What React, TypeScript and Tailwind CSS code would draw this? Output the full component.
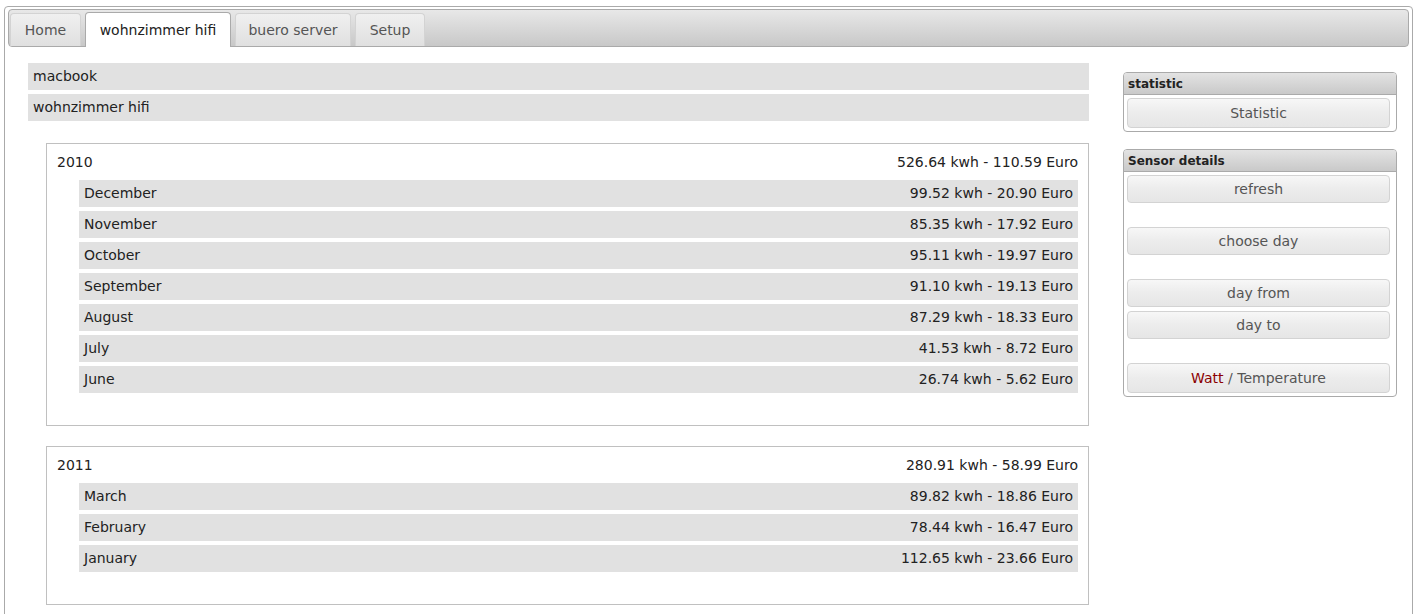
import React from 'react';

type Month = { name: string; value: string };
type Year = { year: string; total: string; months: Month[] };

const tabs = [
  { label: 'Home', width: 'w-[71px]' },
  { label: 'wohnzimmer hifi', width: 'w-[146px]' },
  { label: 'buero server', width: 'w-[116px]' },
  { label: 'Setup', width: 'w-[70px]' },
];
const activeTab = 'wohnzimmer hifi';

const devices = ['macbook', 'wohnzimmer hifi'];

const years: Year[] = [
  {
    year: '2010',
    total: '526.64 kwh - 110.59 Euro',
    months: [
      { name: 'December', value: '99.52 kwh - 20.90 Euro' },
      { name: 'November', value: '85.35 kwh - 17.92 Euro' },
      { name: 'October', value: '95.11 kwh - 19.97 Euro' },
      { name: 'September', value: '91.10 kwh - 19.13 Euro' },
      { name: 'August', value: '87.29 kwh - 18.33 Euro' },
      { name: 'July', value: '41.53 kwh - 8.72 Euro' },
      { name: 'June', value: '26.74 kwh - 5.62 Euro' },
    ],
  },
  {
    year: '2011',
    total: '280.91 kwh - 58.99 Euro',
    months: [
      { name: 'March', value: '89.82 kwh - 18.86 Euro' },
      { name: 'February', value: '78.44 kwh - 16.47 Euro' },
      { name: 'January', value: '112.65 kwh - 23.66 Euro' },
    ],
  },
];

function Button({ children, tall, className = '' }: { children: React.ReactNode; tall?: boolean; className?: string }) {
  return (
    <div
      className={`flex items-center justify-center rounded-[4px] border border-[#d3d3d3] bg-gradient-to-b from-[#f7f7f7] via-[#ececec] to-[#e6e6e6] text-[14px] text-[#555] ${
        tall ? 'h-[30px]' : 'h-[28px]'
      } ${className}`}
    >
      {children}
    </div>
  );
}

function Panel({ title, children }: { title: string; children: React.ReactNode }) {
  return (
    <div className="rounded-[4px] border border-[#aaa] bg-white">
      <div className="flex h-[22px] items-center rounded-t-[3px] border-b border-[#aaa] bg-gradient-to-b from-[#e3e3e3] to-[#c9c9c9] px-[4px] text-[12px] font-bold text-[#222]">
        {title}
      </div>
      <div className="pl-[3px] pr-[6px] pt-[3px] pb-[3px]">{children}</div>
    </div>
  );
}

function YearBox({ data, className = '' }: { data: Year; className?: string }) {
  return (
    <div className={`ml-[18px] border border-[#c0c0c0] pl-[10px] pr-[10px] pt-[5px] pb-[32px] ${className}`}>
      <div className="flex h-[27px] items-center justify-between">
        <span>{data.year}</span>
        <span>{data.total}</span>
      </div>
      <div className="ml-[22px] mt-[4px] flex flex-col gap-[4px]">
        {data.months.map((m) => (
          <div key={m.name} className="flex h-[27px] items-center justify-between bg-[#e1e1e1] px-[5px]">
            <span>{m.name}</span>
            <span>{m.value}</span>
          </div>
        ))}
      </div>
    </div>
  );
}

export default function App() {
  return (
    <div className="h-[614px] overflow-hidden bg-white text-[14px] text-[#222]" style={{ fontFamily: '"DejaVu Sans", Verdana, sans-serif' }}>
      <div className="mx-[4px] mt-[6px] h-[640px] rounded-[4px] border border-[#aaa] px-[3px] pt-[2px]">
        {/* tab bar */}
        <div className="flex h-[38px] items-end gap-[4px] rounded-[4px] border border-[#aaa] bg-gradient-to-b from-[#e8e8e8] to-[#c8c8c8] pl-[1px]">
          {tabs.map((t) =>
            t.label === activeTab ? (
              <div
                key={t.label}
                className={`-mb-[1px] flex h-[35px] items-center justify-center rounded-t-[4px] border border-b-0 border-[#aaa] bg-white text-[#222] ${t.width}`}
              >
                {t.label}
              </div>
            ) : (
              <div
                key={t.label}
                className={`flex h-[33px] items-center justify-center rounded-t-[4px] border border-b-0 border-[#d3d3d3] bg-gradient-to-b from-[#f0f0f0] to-[#e0e0e0] text-[#555] ${t.width}`}
              >
                {t.label}
              </div>
            )
          )}
        </div>

        {/* content */}
        <div className="flex pl-[20px] pt-[16px]">
          <div className="w-[1061px]">
            <div className="flex flex-col gap-[4px]">
              {devices.map((d) => (
                <div key={d} className="flex h-[27px] items-center bg-[#e1e1e1] px-[5px]">
                  {d}
                </div>
              ))}
            </div>
            <YearBox data={years[0]} className="mt-[22px]" />
            <YearBox data={years[1]} className="mt-[20px]" />
          </div>

          <div className="ml-[34px] mt-[9px] flex w-[274px] flex-col gap-[17px]">
            <Panel title="statistic">
              <Button tall>Statistic</Button>
            </Panel>
            <Panel title="Sensor details">
              <Button>refresh</Button>
              <Button className="mt-[24px]">choose day</Button>
              <Button className="mt-[24px]">day from</Button>
              <Button className="mt-[4px]">day to</Button>
              <Button tall className="mt-[24px]">
                <span className="text-[#8b0000]">Watt</span>&nbsp;/ Temperature
              </Button>
            </Panel>
          </div>
        </div>
      </div>
    </div>
  );
}
